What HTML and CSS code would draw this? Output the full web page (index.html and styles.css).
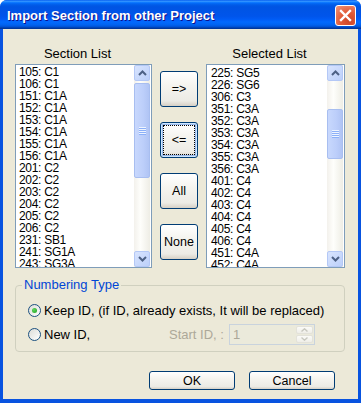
FILE: index.html
```html
<!DOCTYPE html>
<html lang="en">
<head>
    <meta charset="UTF-8">
    <title>Import Section from other Project</title>
    <link rel="stylesheet" href="styles.css">
</head>
<body>
    <div class="window">
        <div class="titlebar">
            <span class="title">Import Section from other Project</span>
            <span class="close">
                <svg width="13" height="13" viewBox="0 0 13 13"><path d="M2 2 L11 11 M11 2 L2 11" stroke="#fff" stroke-width="2.4" stroke-linecap="square"/></svg>
            </span>
        </div>

        <div class="dialog">
            <div class="lists">
                <div class="col col-left">
                    <div class="caption">Section List</div>
                    <div class="listbox">
                        <ul class="items">
                            <li>105: C1</li>
                            <li>106: C1</li>
                            <li>151: C1A</li>
                            <li>152: C1A</li>
                            <li>153: C1A</li>
                            <li>154: C1A</li>
                            <li>155: C1A</li>
                            <li>156: C1A</li>
                            <li>201: C2</li>
                            <li>202: C2</li>
                            <li>203: C2</li>
                            <li>204: C2</li>
                            <li>205: C2</li>
                            <li>206: C2</li>
                            <li>231: SB1</li>
                            <li>241: SG1A</li>
                            <li>243: SG3A</li>
                        </ul>
                        <div class="scrollbar">
                            <div class="sb-btn"><svg width="9" height="6" viewBox="0 0 9 6"><path d="M1 5 L4.5 1.5 L8 5" fill="none" stroke="#4d6185" stroke-width="2"/></svg></div>
                            <div class="track">
                                <div class="thumb thumb-left"><span class="grip"></span></div>
                            </div>
                            <div class="sb-btn"><svg width="9" height="6" viewBox="0 0 9 6"><path d="M1 1 L4.5 4.5 L8 1" fill="none" stroke="#4d6185" stroke-width="2"/></svg></div>
                        </div>
                    </div>
                </div>

                <div class="moves">
                    <button class="btn btn-move">=&gt;</button>
                    <button class="btn btn-move focus">&lt;=</button>
                    <button class="btn btn-move">All</button>
                    <button class="btn btn-move">None</button>
                </div>

                <div class="col col-right">
                    <div class="caption">Selected List</div>
                    <div class="listbox">
                        <ul class="items">
                            <li>225: SG5</li>
                            <li>226: SG6</li>
                            <li>306: C3</li>
                            <li>351: C3A</li>
                            <li>352: C3A</li>
                            <li>353: C3A</li>
                            <li>354: C3A</li>
                            <li>355: C3A</li>
                            <li>356: C3A</li>
                            <li>401: C4</li>
                            <li>402: C4</li>
                            <li>403: C4</li>
                            <li>404: C4</li>
                            <li>405: C4</li>
                            <li>406: C4</li>
                            <li>451: C4A</li>
                            <li>452: C4A</li>
                        </ul>
                        <div class="scrollbar">
                            <div class="sb-btn"><svg width="9" height="6" viewBox="0 0 9 6"><path d="M1 5 L4.5 1.5 L8 5" fill="none" stroke="#4d6185" stroke-width="2"/></svg></div>
                            <div class="track">
                                <div class="thumb thumb-right"><span class="grip"></span></div>
                            </div>
                            <div class="sb-btn"><svg width="9" height="6" viewBox="0 0 9 6"><path d="M1 1 L4.5 4.5 L8 1" fill="none" stroke="#4d6185" stroke-width="2"/></svg></div>
                        </div>
                    </div>
                </div>
            </div>

            <fieldset class="group">
                <legend>Numbering Type</legend>
                <div class="opt-row">
                    <span class="radio checked"></span>
                    <span>Keep ID, (if ID, already exists, It will be replaced)</span>
                </div>
                <div class="opt-row">
                    <span class="opt-new">
                        <span class="radio"></span>
                        <span>New ID,</span>
                    </span>
                    <span class="disabled-label">Start ID, :</span>
                    <span class="spin">
                        <span class="spin-value">1</span>
                        <span class="spin-btns">
                            <span class="spin-btn"><svg width="7" height="4" viewBox="0 0 7 4"><path d="M0.5 3.5 L3.5 0.8 L6.5 3.5" fill="none" stroke="#c8c8c0" stroke-width="1.4"/></svg></span>
                            <span class="spin-btn"><svg width="7" height="4" viewBox="0 0 7 4"><path d="M0.5 0.5 L3.5 3.2 L6.5 0.5" fill="none" stroke="#c8c8c0" stroke-width="1.4"/></svg></span>
                        </span>
                    </span>
                </div>
            </fieldset>

            <div class="actions">
                <button class="btn btn-action">OK</button>
                <button class="btn btn-action">Cancel</button>
            </div>
        </div>
    </div>
</body>
</html>
```

FILE: styles.css
```css
body {
    margin: 0;
    font-family: "Liberation Sans", Arial, sans-serif;
    font-size: 13px;
    color: #000;
}
.window {
    width: 361px;
    height: 403px;
    display: flex;
    flex-direction: column;
    background: #0853e0;
    border-radius: 7px 7px 0 0;
    overflow: hidden;
}
.titlebar {
    height: 29px;
    box-sizing: border-box;
    padding: 2px 5px 0 7px;
    display: flex;
    align-items: center;
    justify-content: space-between;
    background: linear-gradient(#0058ee 0%, #3593ff 4%, #288eff 6%, #127dff 8%, #036ffc 10%, #0262ee 14%, #0057e5 20%, #0054e3 24%, #0055eb 56%, #005bf5 66%, #026afe 76%, #0062ef 86%, #0052d6 92%, #0040ab 96%, #003092 100%);
}
.title {
    color: #fff;
    font-weight: bold;
    font-size: 13px;
    text-shadow: 1px 1px #0f1089;
}
.close {
    width: 21px;
    height: 21px;
    box-sizing: border-box;
    border: 1px solid #fff;
    border-radius: 3px;
    display: flex;
    align-items: center;
    justify-content: center;
    background: radial-gradient(circle at 70% 80%, #cc4628 0%, #e25b38 45%, #f0967c 100%);
}
.dialog {
    flex: 1;
    margin: 0 3px 4px 3px;
    background: #ece9d8;
    padding: 18px 13px 0 12px;
}
.lists {
    display: flex;
    gap: 8px;
}
.col-left {
    width: 137px;
}
.col-right {
    width: 139px;
}
.caption {
    height: 14px;
    line-height: 14px;
    margin-bottom: 3px;
    text-align: center;
    padding-right: 12px;
}
.listbox {
    height: 204px;
    box-sizing: border-box;
    border: 1px solid #7f9db9;
    background: #fff;
    display: flex;
}
.items {
    flex: 1;
    list-style: none;
    margin: 0;
    padding: 1px 0 0 3px;
    overflow: hidden;
    font-size: 12px;
    line-height: 12px;
    letter-spacing: -0.3px;
}
.col-right .items {
    padding-left: 4px;
    padding-top: 2px;
}
.scrollbar {
    width: 16px;
    margin-right: 1px;
    display: flex;
    flex-direction: column;
    background: linear-gradient(to right, #f3f1ec, #fefefb 40%, #eeede5);
}
.sb-btn {
    height: 16px;
    box-sizing: border-box;
    border: 1px solid #b4c8f6;
    border-radius: 2px;
    background: linear-gradient(135deg, #d8e4fe, #bcd0fa);
    display: flex;
    align-items: center;
    justify-content: center;
}
.track {
    flex: 1;
}
.thumb {
    box-sizing: border-box;
    border: 1px solid #a8bef0;
    border-radius: 2px;
    background: linear-gradient(to right, #c8d8fd, #bccefa 60%, #b0c4f4);
    display: flex;
    align-items: center;
    justify-content: center;
}
.thumb-left {
    margin-top: 2px;
    height: 95px;
}
.thumb-right {
    margin-top: 28px;
    height: 50px;
}
.grip {
    width: 7px;
    height: 8px;
    background: repeating-linear-gradient(#eef4ff 0, #eef4ff 1px, #8cb0f8 1px, #8cb0f8 2px);
}
.moves {
    width: 38px;
    padding-top: 24px;
    display: flex;
    flex-direction: column;
    gap: 15px;
}
.btn {
    font-family: "Liberation Sans", Arial, sans-serif;
    font-size: 12.5px;
    color: #000;
    padding: 0;
    border: 1px solid #003c74;
    border-radius: 3px;
    background: linear-gradient(#ffffff, #f5f4ef 40%, #ecebe5 85%, #d6d0c5);
}
.btn-move {
    height: 36px;
}
.focus {
    box-shadow: inset 0 0 0 1px #cee7ff, inset 0 0 0 2px #98b8ea;
    outline: 1px dotted #000;
    outline-offset: -4px;
}
.group {
    margin: 10px 0 0 0;
    width: 330px;
    box-sizing: border-box;
    border: 1px solid #d0d0bf;
    border-radius: 4px;
    padding: 10px 12px 6px 12px;
}
.group legend {
    color: #0046d5;
    line-height: 14px;
    padding: 0 2px;
    margin-left: -6px;
}
.opt-row {
    display: flex;
    align-items: center;
    gap: 3px;
    height: 16px;
}
.opt-row + .opt-row {
    margin-top: 5px;
    height: 22px;
    gap: 0;
}
.radio {
    width: 13px;
    height: 13px;
    box-sizing: border-box;
    border: 1px solid #1c5180;
    border-radius: 50%;
    background: linear-gradient(135deg, #dcdcd7, #ffffff);
    display: inline-flex;
    align-items: center;
    justify-content: center;
}
.checked::after {
    content: "";
    width: 5px;
    height: 5px;
    border-radius: 50%;
    background: radial-gradient(circle at 35% 35%, #5ed65e, #21a121);
}
.opt-new {
    width: 141px;
    display: flex;
    align-items: center;
    gap: 3px;
}
.disabled-label {
    color: #aca899;
    width: 60px;
}
.spin {
    width: 86px;
    height: 21px;
    box-sizing: border-box;
    border: 1px solid #c9d3dd;
    background: #ebeadb;
    display: flex;
}
.spin-value {
    flex: 1;
    color: #aca899;
    padding: 2px 0 0 3px;
}
.spin-btns {
    width: 17px;
    display: flex;
    flex-direction: column;
    padding: 1px 1px 1px 0;
    gap: 1px;
}
.spin-btn {
    flex: 1;
    border-radius: 2px;
    background: linear-gradient(#fbfbf8, #efeee8);
    border: 1px solid #e3e2da;
    display: flex;
    align-items: center;
    justify-content: center;
}
.actions {
    display: flex;
    justify-content: flex-end;
    gap: 14px;
    margin-top: 19px;
    padding-right: 10px;
}
.btn-action {
    width: 86px;
    height: 19px;
}
```
